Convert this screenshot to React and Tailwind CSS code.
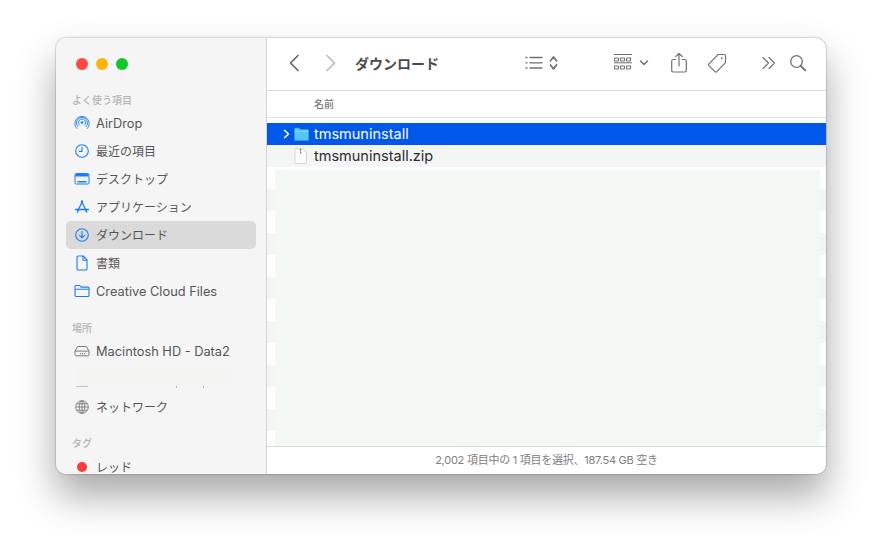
import React from 'react';

const blue = '#1a7cf7';

function AirDropIcon() {
  return (
    <svg width="16" height="16" viewBox="0 0 16 16" fill="none" stroke={blue} strokeWidth="0.9">
      <circle cx="8" cy="7.500" r="1.300" fill={blue} stroke="none" />
      <path d="M5.800 10.300a3.500 3.500 0 1 1 4.400 0" />
      <path d="M4.200 12a5.500 5.500 0 1 1 7.600 0" />
      <path d="M2.900 13.700a7.200 7.200 0 1 1 10.200 0" />
    </svg>
  );
}

function ClockIcon() {
  return (
    <svg width="16" height="16" viewBox="0 0 16 16" fill="none" stroke={blue} strokeWidth="1.100">
      <circle cx="8" cy="8" r="6.300" />
      <path d="M8 3.800V8.400H4.800" />
    </svg>
  );
}

function DesktopIcon() {
  return (
    <svg width="16" height="16" viewBox="0 0 16 16" fill="none">
      <rect x="1" y="2.500" width="14" height="10.500" rx="1.300" stroke={blue} />
      <rect x="1.500" y="3" width="13" height="2.500" fill={blue} />
      <rect x="3.500" y="10" width="9" height="1.500" fill={blue} />
    </svg>
  );
}

function AppsIcon() {
  return (
    <svg width="16" height="16" viewBox="0 0 16 16" fill="none" stroke={blue} strokeWidth="1.300" strokeLinecap="round">
      <path d="M8.600 2 4 11.500" />
      <path d="M7.400 2 12 11.500" />
      <path d="M1.500 10.500h13" />
      <path d="M3.400 13.200 4 11.500M12.600 13.200 12 11.500" />
    </svg>
  );
}

function DownloadIcon() {
  return (
    <svg width="16" height="16" viewBox="0 0 16 16" fill="none" stroke={blue} strokeWidth="1.100" strokeLinecap="round" strokeLinejoin="round">
      <circle cx="8" cy="8" r="6.300" />
      <path d="M8 4.500v6.300M5.500 8.400 8 10.900l2.500-2.500" />
    </svg>
  );
}

function DocIcon() {
  return (
    <svg width="16" height="16" viewBox="0 0 16 16" fill="none" stroke={blue} strokeWidth="1.100" strokeLinejoin="round">
      <path d="M3 2.300A1.300 1.300 0 0 1 4.300 1h4.900l3.800 4v8.700a1.300 1.300 0 0 1-1.300 1.300H4.300A1.300 1.300 0 0 1 3 13.700z" />
      <path d="M9 1.100V5.200h3.900" />
    </svg>
  );
}

function FolderIcon() {
  return (
    <svg width="16" height="16" viewBox="0 0 16 16" fill="none" stroke={blue} strokeWidth="1.100" strokeLinejoin="round">
      <path d="M1 3.500a1 1 0 0 1 1-1h3.800l1.400 1.600h6.800a1 1 0 0 1 1 1v7.400a1 1 0 0 1-1 1H2a1 1 0 0 1-1-1z" />
      <path d="M1 6.300h14" />
    </svg>
  );
}

function DriveIcon() {
  return (
    <svg width="16" height="16" viewBox="0 0 16 16" fill="none" stroke="#7a7a7a" strokeWidth="1">
      <path d="M3.600 3.500h8.800l2.600 4.600v3.500a1.200 1.200 0 0 1-1.200 1.200H2.200A1.200 1.200 0 0 1 1 11.600V8.100z" />
      <path d="M1.200 8.100h13.600" />
      <path d="M6 10.700h1M8 10.700h1M10 10.700h1" strokeWidth="1.200" />
    </svg>
  );
}

function GlobeIcon() {
  return (
    <svg width="16" height="16" viewBox="0 0 16 16" fill="none" stroke="#7a7a7a" strokeWidth="0.900">
      <circle cx="8" cy="8" r="6.300" />
      <ellipse cx="8" cy="8" rx="2.800" ry="6.300" />
      <path d="M8 1.700v12.600M1.700 8h12.600M2.600 4.800h10.800M2.600 11.200h10.800" />
    </svg>
  );
}

function SideItem({ icon, label, latin, active }) {
  return (
    <div className={`mx-[10px] h-[28px] flex items-center pl-[8px] rounded-[5px] shrink-0 ${active ? 'bg-[#dadada]' : ''}`}>
      <span className="w-[16px] h-[16px] flex items-center justify-center shrink-0">{icon}</span>
      <span className={`ml-[6px] pt-[2px] text-[#555] whitespace-nowrap ${latin ? 'text-[12.800px]' : 'text-[12px]'}`}>{label}</span>
    </div>
  );
}

function SideLabel({ children, className }) {
  return <div className={`pl-[16px] text-[10px] leading-[14px] font-medium text-[#b4b4b4] shrink-0 ${className}`}>{children}</div>;
}

function Sidebar() {
  return (
    <aside className="w-[211px] shrink-0 h-full bg-[#f5f5f5] border-r border-[#d4d4d4] flex flex-col overflow-hidden">
      <div className="flex gap-[8px] pl-[20px] pt-[20px] shrink-0">
        <span className="w-[12px] h-[12px] rounded-full bg-[#fc4a42]" />
        <span className="w-[12px] h-[12px] rounded-full bg-[#fdb606]" />
        <span className="w-[12px] h-[12px] rounded-full bg-[#12c72c]" />
      </div>
      <SideLabel className="mt-[23px] mb-[2px]">よく使う項目</SideLabel>
      <SideItem icon={<AirDropIcon />} label="AirDrop" latin />
      <SideItem icon={<ClockIcon />} label="最近の項目" />
      <SideItem icon={<DesktopIcon />} label="デスクトップ" />
      <SideItem icon={<AppsIcon />} label="アプリケーション" />
      <SideItem icon={<DownloadIcon />} label="ダウンロード" active />
      <SideItem icon={<DocIcon />} label="書類" />
      <SideItem icon={<FolderIcon />} label="Creative Cloud Files" latin />
      <SideLabel className="mt-[16px] mb-[2px]">場所</SideLabel>
      <SideItem icon={<DriveIcon />} label="Macintosh HD - Data2" latin />
      <div className="ml-[20px] w-[154px] h-[20px] bg-[#f4f4f2] shrink-0 mt-[1px]" />
      <div className="h-[7px] shrink-0 flex items-start pl-[20px]">
        <span className="w-[12px] h-[1px] bg-[#c4c4c4]" />
        <span className="ml-[88px] w-[1px] h-[2px] bg-[#b8b8b8]" />
        <span className="ml-[26px] w-[1px] h-[2px] bg-[#b8b8b8]" />
      </div>
      <SideItem icon={<GlobeIcon />} label="ネットワーク" />
      <SideLabel className="mt-[15px] mb-[3px]">タグ</SideLabel>
      <SideItem icon={<span className="w-[10px] h-[10px] rounded-full bg-[#fc3d39]" />} label="レッド" />
    </aside>
  );
}

function Toolbar() {
  return (
    <div className="h-[53px] shrink-0 border-b border-[#dcdcdc] flex items-center pb-[2px] text-[#707070]">
      <svg className="ml-[21px]" width="12" height="18" viewBox="0 0 12 18" fill="none" stroke="#666" strokeWidth="1.700" strokeLinecap="round" strokeLinejoin="round">
        <path d="M10 1.500 2.500 9l7.500 7.500" />
      </svg>
      <svg className="ml-[25px]" width="12" height="18" viewBox="0 0 12 18" fill="none" stroke="#bdbdbd" strokeWidth="1.700" strokeLinecap="round" strokeLinejoin="round">
        <path d="M2 1.500 9.500 9 2 16.500" />
      </svg>
      <span className="ml-[18px] text-[14px] font-semibold text-[#4a4a4a] w-[170px] whitespace-nowrap">ダウンロード</span>
      <svg width="34" height="18" viewBox="0 0 34 18" fill="none" stroke="#707070" strokeWidth="1.300" strokeLinecap="round" strokeLinejoin="round">
        <path d="M1 3.500h1M1 8.800h1M1 14h1M5 3.500h12M5 8.800h12M5 14h12" />
        <path d="M25.500 6.800 28.500 3l3 3.800M25.500 11 28.500 15l3-4" strokeWidth="1.700" />
      </svg>
      <svg className="ml-[54px]" width="36" height="20" viewBox="0 0 36 20" fill="none" stroke="#707070" strokeWidth="1">
        <path d="M1 1.500h18M1 9.800h18" />
        <path d="M1.500 5h4v3h-4zM7.500 5h4v3h-4zM13.500 5h4v3h-4zM1.500 13h4v3h-4zM7.500 13h4v3h-4zM13.500 13h4v3h-4z" />
        <path d="M27.500 8 31 11.500 34.500 8" strokeWidth="1.500" strokeLinecap="round" strokeLinejoin="round" />
      </svg>
      <svg className="ml-[21px]" width="18" height="22" viewBox="0 0 18 22" fill="none" stroke="#707070" strokeWidth="1.200" strokeLinecap="round" strokeLinejoin="round">
        <path d="M5.500 7.500H3.200a1.500 1.500 0 0 0-1.500 1.500v9.500a1.500 1.500 0 0 0 1.500 1.500h11.600a1.500 1.500 0 0 0 1.500-1.500V9a1.500 1.500 0 0 0-1.500-1.500h-2.300" />
        <path d="M9 14V1.500M5.800 4.500 9 1.300l3.200 3.200" />
      </svg>
      <svg className="ml-[18px]" width="22" height="22" viewBox="0 0 22 22" fill="none" stroke="#707070" strokeWidth="1.200" strokeLinejoin="round">
        <path d="M12 2.500h6.200a1.300 1.300 0 0 1 1.300 1.300V10a2 2 0 0 1-.6 1.400l-8.200 8.200a1.300 1.300 0 0 1-1.800 0l-6-6a1.300 1.300 0 0 1 0-1.800l8.200-8.200A2 2 0 0 1 12 2.500z" />
        <circle cx="15.800" cy="6.200" r="0.900" fill="#707070" stroke="none" />
      </svg>
      <svg className="ml-[34px]" width="14" height="14" viewBox="0 0 14 14" fill="none" stroke="#707070" strokeWidth="1.100" strokeLinecap="round" strokeLinejoin="round">
        <path d="M1 1.500 6.500 7 1 12.500M7 1.500 12.500 7 7 12.500" />
      </svg>
      <svg className="ml-[13px]" width="18" height="18" viewBox="0 0 18 18" fill="none" stroke="#707070" strokeLinecap="round">
        <circle cx="7.500" cy="7.500" r="5.800" strokeWidth="1.300" />
        <path d="M11.800 11.800 16.300 16.300" strokeWidth="1.900" />
      </svg>
    </div>
  );
}

function FileRows() {
  const stripes = Array.from({ length: 14 }, (_, i) => i);
  return (
    <div className="relative flex-1 overflow-hidden pt-[5px]">
      <div className="h-[22px] bg-[#0058e8] flex items-center text-white">
        <svg className="ml-[16px]" width="7" height="10" viewBox="0 0 7 10" fill="none" stroke="#fff" strokeWidth="1.500" strokeLinecap="round" strokeLinejoin="round">
          <path d="M1.500 1.200 5.500 5l-4 3.800" />
        </svg>
        <svg className="ml-[4px]" width="15" height="14" viewBox="0 0 15 14" fill="none">
          <path d="M.5 2.200A1.200 1.200 0 0 1 1.700 1h3.400l1.300 1.400h7A1.200 1.200 0 0 1 14.600 3.600v8.800a1.200 1.200 0 0 1-1.200 1.200H1.700A1.200 1.200 0 0 1 .5 12.400z" fill="#58c6f3" stroke="#2f9fdc" strokeWidth="0.600" />
          <path d="M.8 4.300h13.500" stroke="#8bdcf8" />
        </svg>
        <span className="ml-[5px] text-[14.500px] leading-none whitespace-nowrap">tmsmuninstall</span>
      </div>
      <div className="h-[22px] bg-[#f4f5f5] flex items-center">
        <svg className="ml-[27px]" width="13" height="16" viewBox="0 0 13 16" fill="none">
          <path d="M1 1.500A1 1 0 0 1 2 .5h6.500L12.500 4.500V14.500a1 1 0 0 1-1 1H2a1 1 0 0 1-1-1z" fill="#fdfdfd" stroke="#c6c6c6" strokeWidth="0.700" />
          <path d="M6.500 1v5" stroke="#555" strokeWidth="1.200" strokeDasharray="1 0.600" />
        </svg>
        <span className="ml-[7px] text-[14.500px] leading-none text-[#2c2c2c] whitespace-nowrap">tmsmuninstall.zip</span>
      </div>
      {stripes.map((i) => (
        <div key={i} className={`h-[22px] ${i % 2 === 0 ? 'bg-white' : 'bg-[#f4f5f5]'}`} />
      ))}
      <div className="absolute left-[8px] right-[6px] top-[52px] bottom-0 bg-[#f2f8f4]" />
    </div>
  );
}

export default function App() {
  return (
    <div className="w-screen h-screen bg-white overflow-hidden pt-[38px] pl-[56px] font-['Inter','Noto_Sans_CJK_JP',sans-serif]">
      <div className="w-[770px] h-[436px] rounded-[10px] overflow-hidden flex bg-white shadow-[0_22px_38px_rgba(0,0,0,0.34),0_0_2px_rgba(0,0,0,0.45)]">
        <Sidebar />
        <main className="flex-1 min-w-0 h-full flex flex-col">
          <Toolbar />
          <div className="h-[27px] shrink-0 border-b border-[#e0e0e0] flex items-center pl-[47px] text-[10px] font-medium text-[#777]">名前</div>
          <FileRows />
          <div className="h-[28px] shrink-0 border-t border-[#dcdcdc] bg-white flex items-center justify-center text-[11px] tracking-[-0.250px] text-[#808080] whitespace-nowrap">2,002 項目中の 1 項目を選択、187.54 GB 空き</div>
        </main>
      </div>
    </div>
  );
}
